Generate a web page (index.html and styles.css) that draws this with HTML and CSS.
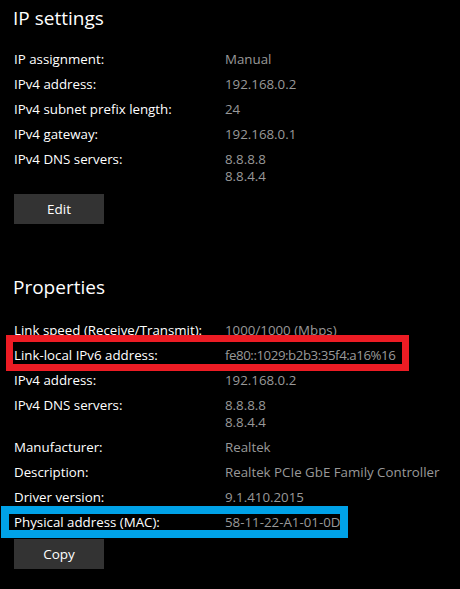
FILE: index.html
```html
<!DOCTYPE html>
<html>
<head>
<meta charset="utf-8">
<link rel="stylesheet" href="styles.css">
</head>
<body>
<div class="page">
  <section class="section">
    <h2 class="title">IP settings</h2>
    <div class="rows">
      <div class="row"><span class="label">IP assignment:</span><span class="value">Manual</span></div>
      <div class="row"><span class="label">IPv4 address:</span><span class="value">192.168.0.2</span></div>
      <div class="row"><span class="label">IPv4 subnet prefix length:</span><span class="value">24</span></div>
      <div class="row"><span class="label">IPv4 gateway:</span><span class="value">192.168.0.1</span></div>
      <div class="row"><span class="label">IPv4 DNS servers:</span><span class="value">8.8.8.8<br>8.8.4.4</span></div>
    </div>
    <button class="btn btn-edit">Edit</button>
  </section>
  <section class="section section-props">
    <h2 class="title">Properties</h2>
    <div class="rows">
      <div class="row"><span class="label">Link speed (Receive/Transmit):</span><span class="value">1000/1000 (Mbps)</span></div>
      <div class="row mark-red"><span class="label">Link-local IPv6 address:</span><span class="value value-tight">fe80::1029:b2b3:35f4:a16%16</span></div>
      <div class="row"><span class="label">IPv4 address:</span><span class="value">192.168.0.2</span></div>
      <div class="row"><span class="label">IPv4 DNS servers:</span><span class="value">8.8.8.8<br>8.8.4.4</span></div>
      <div class="row"><span class="label">Manufacturer:</span><span class="value">Realtek</span></div>
      <div class="row"><span class="label">Description:</span><span class="value">Realtek PCIe GbE Family Controller</span></div>
      <div class="row"><span class="label">Driver version:</span><span class="value">9.1.410.2015</span></div>
      <div class="row mark-blue"><span class="label">Physical address (MAC):</span><span class="value">58-11-22-A1-01-0D</span></div>
    </div>
    <button class="btn btn-copy">Copy</button>
  </section>
</div>
</body>
</html>
```
FILE: styles.css
```css
html, body {
  margin: 0;
  padding: 0;
  background: #000;
}
body {
  font-family: "Open Sans", "Noto Sans", sans-serif;
  color: #fff;
  width: 460px;
  height: 589px;
  overflow: hidden;
}
.page {
  padding: 4px 0 0 14px;
}
.section-props {
  margin-top: 49px;
}
.title {
  margin: 0 0 0 -1px;
  font-size: 19px;
  font-weight: 400;
  line-height: 28px;
  height: 28px;
}
.rows {
  margin-top: 19px;
  display: flex;
  flex-direction: column;
  gap: 8px;
}
.section-props .rows {
  margin-top: 21px;
}
.row {
  position: relative;
  display: grid;
  grid-template-columns: 211px auto;
  font-size: 13.3px;
  line-height: 17px;
}
.label {
  color: #fff;
}
.value {
  color: #999;
}
.value-tight {
  letter-spacing: -0.45px;
}
.btn {
  display: block;
  width: 90px;
  height: 30px;
  border: 0;
  padding: 0;
  background: #333;
  color: #fff;
  font-family: inherit;
  font-size: 13.5px;
}
.btn-edit {
  margin-top: 9px;
}
.btn-copy {
  margin-top: 8px;
}
.mark-red::after,
.mark-blue::after {
  content: "";
  position: absolute;
  pointer-events: none;
}
.mark-red::after {
  left: -8px;
  top: -12px;
  width: 389px;
  height: 22px;
  border: 7px solid #ed1c24;
}
.mark-blue::after {
  left: -13px;
  top: -8px;
  width: 331px;
  height: 16px;
  border: 8px solid #00a2e8;
}
```
